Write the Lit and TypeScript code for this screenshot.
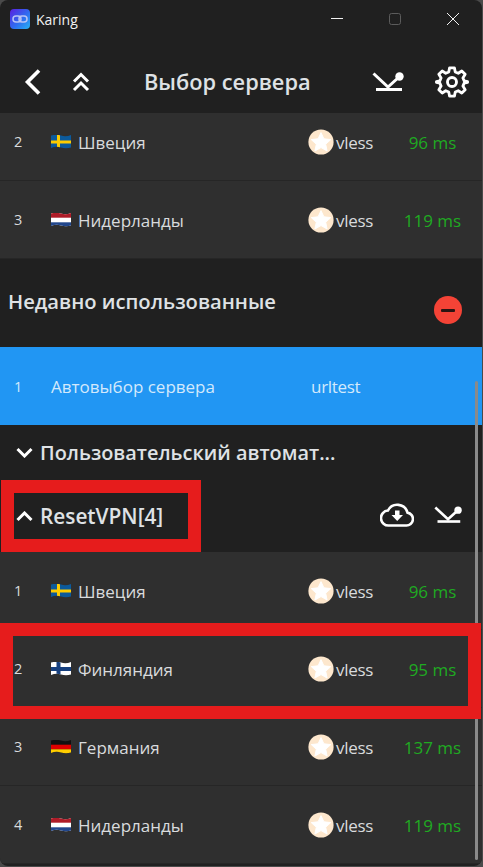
import { LitElement, html, css, svg } from "lit";
import { customElement } from "lit/decorators.js";

const flags: Record<string, unknown> = {
  se: svg`<rect width="20" height="14" fill="#0b5a9c"/><rect x="6" width="3" height="14" fill="#fecc00"/><rect y="5.5" width="20" height="3" fill="#fecc00"/>`,
  nl: svg`<rect width="20" height="14" fill="#fff"/><rect width="20" height="4.7" fill="#ae1c28"/><rect y="9.3" width="20" height="4.7" fill="#21468b"/>`,
  fi: svg`<rect width="20" height="14" fill="#fff"/><rect x="5.5" width="4" height="14" fill="#16407f"/><rect y="5" width="20" height="4" fill="#16407f"/>`,
  de: svg`<rect width="20" height="14" fill="#111"/><rect y="4.7" width="20" height="4.7" fill="#dd0000"/><rect y="9.3" width="20" height="4.7" fill="#ffce00"/>`,
};

const speedIcon = (w: number, h: number) => html`<svg width=${w} height=${h} viewBox="0 0 32 19" fill="none">
  <path d="M1.5 1.5 L16 15 L27 5" stroke="#fff" stroke-width="3"/>
  <circle cx="27.5" cy="4.5" r="4.2" fill="#fff"/>
  <path d="M4 17.5 H30" stroke="#fff" stroke-width="3"/>
</svg>`;

const protoIcon = html`<svg class="proto" width="26" height="26" viewBox="0 0 26 26">
  <circle cx="13" cy="13" r="12.6" fill="#fde7cd"/>
  <path d="M13 3.6 L15.9 9.8 L22.8 10.6 L17.7 15.2 L19.1 22 L13 18.6 L6.9 22 L8.3 15.2 L3.2 10.6 L10.1 9.8 Z" fill="#fff" stroke="#fff" stroke-width="1" stroke-linejoin="round"/>
</svg>`;

@customElement("app-root")
export class AppRoot extends LitElement {
  static styles = css`
    :host {
      display: block;
      width: 483px;
      height: 867px;
      background: #4a4a4a;
      font-family: "Open Sans", "Noto Sans", sans-serif;
      overflow: hidden;
    }
    .win {
      position: relative;
      height: 866px;
      margin-right: 1px;
      background: #202020;
      border-radius: 8px;
      overflow: hidden;
      display: flex;
      flex-direction: column;
    }
    .titlebar {
      height: 38px;
      flex: none;
      display: flex;
      align-items: center;
      padding-left: 10px;
      color: #f2f2f2;
      font-size: 14px;
    }
    .logo {
      width: 20px;
      height: 20px;
      border-radius: 4px;
      background: linear-gradient(135deg, #5a1fe0, #2f6cf0 55%, #27b4f2);
      display: flex;
      align-items: center;
      justify-content: center;
      margin-right: 6px;
    }
    .tname { flex: 1; }
    .wbtn {
      width: 58px;
      display: flex;
      justify-content: center;
    }
    .wbtns { display: flex; margin-top: -1px; }
    .header {
      height: 75px;
      box-sizing: border-box;
      padding-top: 12px;
      flex: none;
      display: flex;
      align-items: center;
      position: relative;
      background: #202020;
      z-index: 1;
    }
    .hleft {
      display: flex;
      align-items: center;
      margin-left: 24px;
      gap: 31px;
    }
    .htitle {
      flex: 1;
      color: #dfe2e5;
      font-size: 21.8px;
      font-weight: 600;
      margin-left: 54px;
    }
    .hright {
      display: flex;
      align-items: center;
      gap: 31px;
      margin-right: 13px;
    }
    .body {
      flex: 1;
      position: relative;
      overflow: hidden;
    }
    .scroll { margin-top: -10px; }
    .row {
      height: 78px;
      box-sizing: border-box;
      display: flex;
      align-items: center;
      background: #2f2f2f;
      border-bottom: 1px solid #262626;
      color: #d9dbdd;
      font-size: 17px;
    }
    .row.sel {
      background: #2196f3;
      color: #d3e9fc;
      border-bottom: none;
    }
    .idx { width: 51px; padding-left: 14px; box-sizing: border-box; font-size: 14.5px; flex: none; }
    .flag {
      width: 20px;
      height: 14px;
      margin-right: 7px;
      flex: none;
      display: block;
      clip-path: path("M0 1 Q5 -0.6 10 1 T20 0.4 V13 Q15 14.6 10 13 T0 13.6 Z");
    }
    .name { flex: none; width: 230px; white-space: nowrap; margin-top: 1px; }
    .row.sel .name { width: 260px; }
    .proto { flex: none; margin-right: 2px; }
    .type { flex: none; width: 64px; letter-spacing: -0.3px; margin-top: 1px; }
    .ms { color: #1faa22; width: 65px; text-align: center; flex: none; white-space: nowrap; margin-top: 1px; }
    .sect {
      height: 88px;
      box-sizing: border-box;
      padding-left: 8px;
      padding-top: 28px;
      display: flex;
      justify-content: space-between;
      color: #dfe2e5;
      font-size: 20.2px;
      font-weight: 600;
    }
    .minus {
      width: 28px;
      height: 28px;
      margin-top: 9px;
      margin-right: 20px;
      border-radius: 50%;
      background: #f44336;
      display: flex;
      align-items: center;
      justify-content: center;
    }
    .minus i { display: block; width: 14px; height: 3px; background: #2a1513; border-radius: 1px; }
    .group {
      display: flex;
      align-items: center;
      padding-left: 16px;
      gap: 7px;
      color: #dfe2e5;
      font-weight: 600;
    }
    .g1 { height: 55px; font-size: 19.9px; }
    .g2 { height: 72px; font-size: 20.8px; }
    .gtext { flex: 1; white-space: nowrap; }
    .gicons { display: flex; align-items: center; gap: 20px; margin-right: 20px; margin-top: -3px; }
    .bar {
      position: absolute;
      right: 4px;
      top: 381px;
      bottom: 6px;
      width: 3px;
      border-radius: 2px;
      background: #8a8a8a;
    }
    .mark {
      position: absolute;
      box-sizing: border-box;
      border: 13px solid #e61c1c;
      pointer-events: none;
    }
    .m1 { left: 1px; top: 480px; width: 200px; height: 72px; }
    .m2 { left: 0; top: 623px; width: 481px; height: 96px; }
  `;

  private row(i: number, flag: string, name: string, ms: string) {
    return html`<div class="row">
      <div class="idx">${i}</div>
      <svg class="flag" viewBox="0 0 20 14" preserveAspectRatio="none">${flags[flag]}</svg>
      <div class="name">${name}</div>
      ${protoIcon}
      <div class="type">vless</div>
      <div class="ms">${ms}</div>
    </div>`;
  }

  render() {
    return html`<div class="win">
      <div class="titlebar">
        <div class="logo">
          <svg width="16" height="8" viewBox="0 0 16 8" fill="none" stroke="#b9c4f5" stroke-width="1.5">
            <rect x="1" y="1" width="8" height="6" rx="3"/><rect x="7" y="1" width="8" height="6" rx="3"/>
          </svg>
        </div>
        <div class="tname">Karing</div>
        <div class="wbtns">
          <div class="wbtn"><svg width="14" height="14" viewBox="0 0 14 14"><path d="M1 6.5H13" stroke="#f2f2f2" stroke-width="1"/></svg></div>
          <div class="wbtn"><svg width="14" height="14" viewBox="0 0 14 14"><rect x="1.5" y="1.5" width="11" height="11" rx="2" fill="none" stroke="#5c5c5c"/></svg></div>
          <div class="wbtn"><svg width="14" height="14" viewBox="0 0 14 14"><path d="M1 1L13 13M13 1L1 13" stroke="#f2f2f2" stroke-width="1"/></svg></div>
        </div>
      </div>

      <div class="header">
        <div class="hleft">
          <svg width="17" height="28" viewBox="0 0 17 28" fill="none"><path d="M15 2.5 L3.5 14 L15 25.5" stroke="#fff" stroke-width="3.6"/></svg>
          <svg width="18" height="20" viewBox="0 0 18 20" fill="none"><path d="M2 9.5 L9 2.5 L16 9.5 M2 18 L9 11 L16 18" stroke="#fff" stroke-width="3"/></svg>
        </div>
        <div class="htitle">Выбор сервера</div>
        <div class="hright">
          ${speedIcon(32, 19)}
          <svg width="34" height="34" viewBox="0 0 24 24" fill="none" stroke="#fff" stroke-width="2" stroke-linejoin="round">
            <circle cx="12" cy="12" r="3.2"/>
            <path d="M10.3 2 H13.7 L14.3 4.9 L16.4 5.8 L18.9 4.2 L21.3 6.6 L19.7 9.1 L20.6 11.2 L23 11.8 V12.2 L20.6 12.8 L19.7 14.9 L21.3 17.4 L18.9 19.8 L16.4 18.2 L14.3 19.1 L13.7 22 H10.3 L9.7 19.1 L7.6 18.2 L5.1 19.8 L2.7 17.4 L4.3 14.9 L3.4 12.8 L1 12.2 V11.8 L3.4 11.2 L4.3 9.1 L2.7 6.6 L5.1 4.2 L7.6 5.8 L9.7 4.9 Z"/>
          </svg>
        </div>
      </div>

      <div class="body">
        <div class="scroll">
          ${this.row(2, "se", "Швеция", "96 ms")}
          ${this.row(3, "nl", "Нидерланды", "119 ms")}
          <div class="sect">
            <div>Недавно использованные</div>
            <div class="minus"><i></i></div>
          </div>
          <div class="row sel">
            <div class="idx">1</div>
            <div class="name">Автовыбор сервера</div>
            <div class="type">urltest</div>
          </div>
          <div class="group g1">
            <svg width="17" height="11" viewBox="0 0 17 11" fill="none"><path d="M1.5 2 L8.5 9 L15.5 2" stroke="#fff" stroke-width="3"/></svg>
            <div class="gtext">Пользовательский автомат...</div>
          </div>
          <div class="group g2">
            <svg width="17" height="11" viewBox="0 0 17 11" fill="none"><path d="M1.5 9 L8.5 2 L15.5 9" stroke="#fff" stroke-width="3"/></svg>
            <div class="gtext">ResetVPN[4]</div>
            <div class="gicons">
              <svg width="34" height="24" viewBox="0 0 34 24" fill="none">
                <path d="M9 22.5 H26 A6.5 6.5 0 0 0 27.5 9.6 A10.5 10.5 0 0 0 8 7.5 A7.5 7.5 0 0 0 9 22.5 Z" stroke="#fff" stroke-width="2.6"/>
                <path d="M15 7.5 H19.5 V12 H23 L17.2 18 L11.5 12 H15 Z" fill="#fff"/>
              </svg>
              ${speedIcon(28, 17)}
            </div>
          </div>
          ${this.row(1, "se", "Швеция", "96 ms")}
          ${this.row(2, "fi", "Финляндия", "95 ms")}
          ${this.row(3, "de", "Германия", "137 ms")}
          ${this.row(4, "nl", "Нидерланды", "119 ms")}
        </div>
      </div>
      <div class="bar"></div>
      <div class="mark m1"></div>
      <div class="mark m2"></div>
    </div>`;
  }
}
